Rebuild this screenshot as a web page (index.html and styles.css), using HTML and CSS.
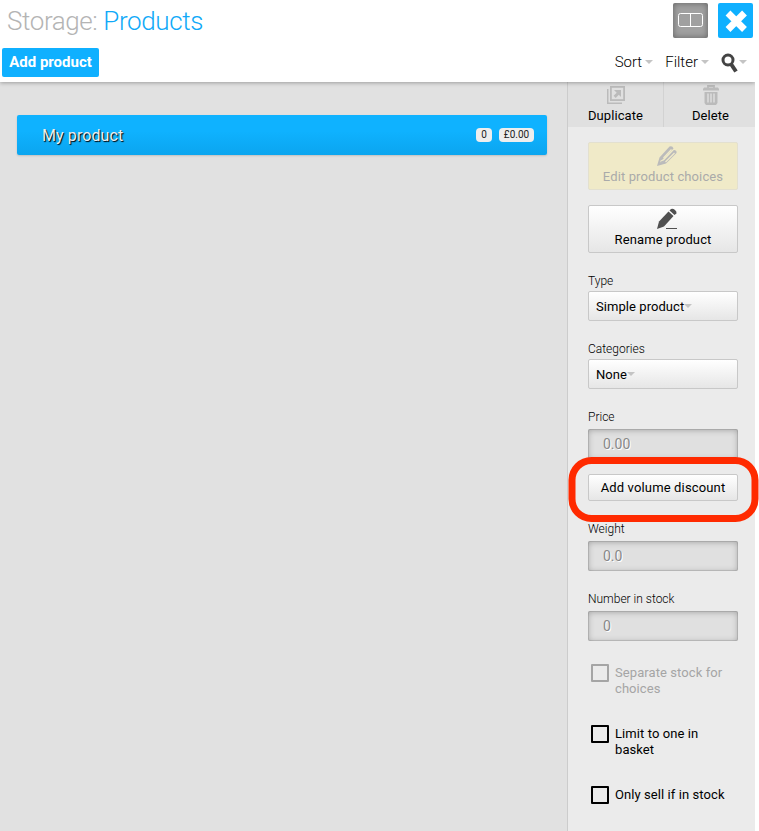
FILE: index.html
```html
<!DOCTYPE html>
<html lang="en">
<head>
<meta charset="utf-8">
<title>Storage: Products</title>
<link rel="stylesheet" href="styles.css">
</head>
<body>
<div class="app">
  <header class="header">
    <div class="title-row">
      <h1 class="title"><span class="muted">Storage:</span> Products</h1>
      <div class="window-buttons">
        <button class="square split" aria-label="Split view"><svg width="35" height="35" viewBox="0 0 35 35"><rect x="5.500" y="10.500" width="24" height="13" rx="2" fill="none" stroke="#fff"/><path d="M17.500 11v12" stroke="#fff"/></svg></button>
        <button class="square close" aria-label="Close"><svg width="35" height="35" viewBox="0 0 35 35"><path d="M10 10L26.500 26.500M26.500 10L10 26.500" stroke="#fff" stroke-width="6.800"/></svg></button>
      </div>
    </div>
    <div class="toolbar">
      <button class="add">Add product</button>
      <nav class="tools">
        <span class="tool sort">Sort<i class="caret"></i></span>
        <span class="tool filter">Filter<i class="caret"></i></span>
        <span class="tool search"><svg width="18" height="20" viewBox="0 0 18 20"><circle cx="7" cy="7" r="5" fill="none" stroke="#444" stroke-width="3"/><path d="M10 11l5 7.500" stroke="#444" stroke-width="4"/></svg><i class="caret"></i></span>
      </nav>
    </div>
  </header>
  <div class="body">
    <main class="list">
      <div class="product"><span class="name">My product</span><span class="badge count">0</span><span class="badge price">£0.00</span></div>
    </main>
    <aside class="sidebar">
      <div class="tabs">
        <button class="tab"><svg width="18" height="18" viewBox="0 0 18 18"><path d="M.75 3v14.250H15" fill="none" stroke="#bbb" stroke-width="1.500"/><rect x="3.900" y=".9" width="13.200" height="13.200" fill="none" stroke="#bbb" stroke-width="1.800"/><path d="M7 4h7v7l-2.200-2.200-3.100 3.100-2.100-2.100 3.100-3.100z" fill="#bbb"/></svg><span>Duplicate</span></button>
        <button class="tab"><svg width="16" height="20" viewBox="0 0 16 20"><path d="M5 3V1h6v2" fill="none" stroke="#bbb" stroke-width="1.800"/><path d="M1 2.500h14l1 1.500v1.500H0V4zM1.500 7h13v11l-1.500 2H3l-1.500-2z" fill="#bbb"/><path d="M5 8.500v9M8 8.500v9M11 8.500v9" stroke="#e0e0e0" stroke-width="1.400"/></svg><span>Delete</span></button>
      </div>
      <div class="panel">
        <button class="action choices"><svg width="22" height="22" viewBox="0 0 22 22"><path d="M1 21l2.500-8.500L13.500 1.500q3-1 4 2L6.500 14.500 4 16l.5 1.500L7 17 18.500 5q2.500.5 2 3L10 18.500z" fill="#bbb"/><path d="M4.500 17.500L8.500 16 18.500 5.500" fill="none" stroke="#bbb" stroke-width="1.600"/><path d="M7.500 13L15.500 4.500M9.500 17l9-9" stroke="#f0eac8" stroke-width="1.300"/></svg><span>Edit product choices</span></button>
        <button class="action rename"><svg width="22" height="22" viewBox="0 0 22 22"><path d="M1 21l2-7.500L12.500 3.500l5 4.500L8 18.500z" fill="#505050"/><path d="M13.500 2.500l1.500-1.500q2-.7 4 1t1.500 3.500L18.500 7z" fill="#505050"/><path d="M10 20.500h11" stroke="#505050"/></svg><span>Rename product</span></button>
        <label class="label type">Type</label>
        <div class="select">Simple product<i class="caret"></i></div>
        <label class="label">Categories</label>
        <div class="select none">None<i class="caret"></i></div>
        <label class="label price-label">Price</label>
        <div class="field">0.00</div>
        <div class="discount-wrap"><button class="discount">Add volume discount</button><div class="highlight"></div></div>
        <label class="label weight-label">Weight</label>
        <div class="field">0.0</div>
        <label class="label stock-label">Number in stock</label>
        <div class="field">0</div>
        <div class="check disabled"><i class="box"></i><span>Separate stock for<br>choices</span></div>
        <div class="check"><i class="box"></i><span>Limit to one in<br>basket</span></div>
        <div class="check only"><i class="box"></i><span>Only sell if in stock</span></div>
      </div>
    </aside>
  </div>
</div>
</body>
</html>
```
FILE: styles.css
```css
* { box-sizing: border-box; }
body { margin: 0; background: #fff; color: #000; font-family: Roboto, "Liberation Sans", sans-serif; overflow: hidden; }
button { font: inherit; color: inherit; border: 0; margin: 0; padding: 0; display: block; }
svg { display: block; }
.app { width: 755px; height: 831px; display: flex; flex-direction: column; }
.header { height: 82px; flex: none; background: #fff; box-shadow: 0 1px 4px rgba(0,0,0,.3); position: relative; z-index: 1; clip-path: inset(0 0 -8px 0); }
.title-row { display: flex; justify-content: space-between; height: 48px; padding: 3px 2px 0 7px; }
.title { margin: 0; font-size: 26px; font-weight: 300; line-height: 36px; letter-spacing: -.4px; color: #0fa9f8; white-space: nowrap; }
.muted { color: #b4b4b4; }
.window-buttons { display: flex; gap: 10px; }
.square { width: 35px; height: 35px; border-radius: 2px; }
.split { background: #a0a0a0; box-shadow: inset 0 0 6px rgba(0,0,0,.4); }
.close { background: #0fb0ff; }
.toolbar { display: flex; justify-content: space-between; padding: 0 8px 0 2px; }
.add { width: 97px; height: 29px; border-radius: 2px; background: #0fb0ff; color: #fff; font-size: 15px; font-weight: 700; line-height: 27px; padding-bottom: 1px; }
.tools { display: flex; font-size: 15px; font-weight: 300; line-height: 28px; gap: 12px; }
.tool { display: flex; align-items: center; height: 28px; }
.search svg { margin-top: 1px; }
.caret { display: inline-block; width: 0; height: 0; border: 4px solid transparent; border-top-color: #c4c4c4; border-bottom: 0; }
.tool .caret { margin-left: 3px; }
.search .caret { margin-left: 0; }
.body { flex: 1; display: flex; min-height: 0; }
.list { width: 567px; background: #e1e1e1; padding: 33px 20px 0 17px; }
.product { display: flex; align-items: center; height: 40px; padding: 0 13px 0 25px; border-radius: 2px; background: linear-gradient(#0fb2ff 40%, #0ba5ef); box-shadow: 0 1px 2px rgba(0,0,0,.15); }
.name { flex: 1; color: #eee; font-size: 16px; letter-spacing: .1px; text-shadow: 1px 1px 1px #000; }
.badge { height: 14px; border-radius: 4px; background: #eee; color: #222; font-size: 10px; line-height: 14px; text-align: center; }
.count { width: 16px; margin-right: 7px; }
.price { width: 35px; }
.sidebar { width: 188px; border-left: 1px solid #ccc; background: #ebebeb; font-size: 13px; }
.tabs { display: flex; height: 45px; background: #e0e0e0; }
.tab { flex: none; width: 95px; height: 45px; display: flex; flex-direction: column; align-items: center; padding-top: 4px; background: none; line-height: 16px; letter-spacing: .1px; }
.tab + .tab { width: 94px; border-left: 1px solid #d2d2d2; padding-top: 3px; }
.tab span { margin-top: 4px; }
.tab + .tab span { margin-top: 3px; }
.panel { padding: 15px 17px 0 20px; }
.action { width: 150px; height: 48px; display: flex; flex-direction: column; align-items: center; padding-top: 2px; border: 1px solid #c6c6c6; border-radius: 2px; line-height: 16px; letter-spacing: .12px; }
.action svg { position: relative; left: 4px; }
.action span { margin-top: 2px; }
.rename, .select, .discount { background: linear-gradient(#fff, #e6e6e6); border: 1px solid #c8c8c8; border-radius: 2px; }
.choices { background: #f0eac8; border-color: #e3e0cf; color: #aaa; margin-bottom: 15px; }
.label { display: block; font-size: 12px; font-weight: 300; line-height: 14px; margin-top: 21px; margin-bottom: 3px; }
.select { height: 30px; padding-left: 7px; letter-spacing: .06px; line-height: 29px; display: flex; align-items: center; }
.field { height: 30px; padding-left: 15px; font-size: 14px; line-height: 30px; color: #888; text-shadow: 1px 1px 0 #fff; background: #e0e0e0; border-radius: 2px; box-shadow: inset 0 1px 6px rgba(0,0,0,.28), inset 0 0 0 1px #c8c8c8; }
.price-label, .weight-label, .stock-label { margin-bottom: 5px; }
.discount-wrap { position: relative; margin-top: 15px; height: 27px; }
.discount { width: 150px; height: 27px; letter-spacing: .15px; line-height: 25px; }
.highlight { position: absolute; left: -20px; top: -17px; width: 190px; height: 65px; border: 7px solid #ff2a00; border-radius: 23px; transform: translateX(.5px); }
.check { display: flex; height: 61px; padding-left: 3px; line-height: 16px; letter-spacing: .08px; }
.disabled { color: #a5a5a5; margin-top: 23px; }
.box { width: 18px; height: 18px; margin-right: 6px; border: 2px solid currentColor; border-radius: 1px; flex: none; }
.check span { white-space: nowrap; padding-top: 1px; }
```
